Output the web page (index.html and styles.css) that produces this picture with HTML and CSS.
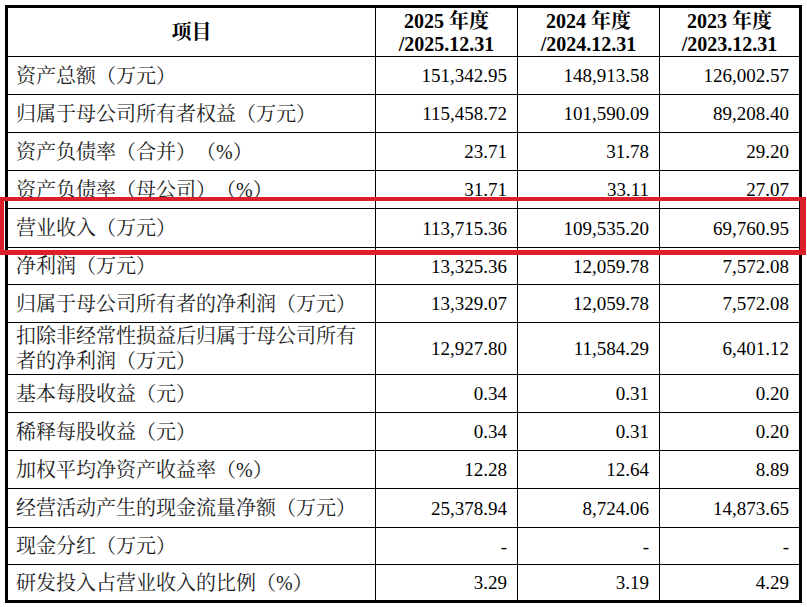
FILE: index.html
```html
<!DOCTYPE html>
<html lang="zh-CN">
<head>
<meta charset="utf-8">
<title>主要财务数据</title>
<link rel="stylesheet" href="styles.css">
</head>
<body>
<div class="page">
  <div class="sheet">
    <div class="c h">项目</div>
    <div class="c h"><span>2025 年度</span><span>/2025.12.31</span></div>
    <div class="c h"><span>2024 年度</span><span>/2024.12.31</span></div>
    <div class="c h"><span>2023 年度</span><span>/2023.12.31</span></div>

    <div class="c l">资产总额（万元）</div>
    <div class="c n">151,342.95</div><div class="c n">148,913.58</div><div class="c n">126,002.57</div>

    <div class="c l">归属于母公司所有者权益（万元）</div>
    <div class="c n">115,458.72</div><div class="c n">101,590.09</div><div class="c n">89,208.40</div>

    <div class="c l">资产负债率（合并）（%）</div>
    <div class="c n">23.71</div><div class="c n">31.78</div><div class="c n">29.20</div>

    <div class="c l">资产负债率（母公司）（%）</div>
    <div class="c n">31.71</div><div class="c n">33.11</div><div class="c n">27.07</div>

    <div class="c l">营业收入（万元）</div>
    <div class="c n">113,715.36</div><div class="c n">109,535.20</div><div class="c n">69,760.95</div>

    <div class="c l">净利润（万元）</div>
    <div class="c n">13,325.36</div><div class="c n">12,059.78</div><div class="c n">7,572.08</div>

    <div class="c l">归属于母公司所有者的净利润（万元）</div>
    <div class="c n">13,329.07</div><div class="c n">12,059.78</div><div class="c n">7,572.08</div>

    <div class="c l two">扣除非经常性损益后归属于母公司所有者的净利润（万元）</div>
    <div class="c n">12,927.80</div><div class="c n">11,584.29</div><div class="c n">6,401.12</div>

    <div class="c l">基本每股收益（元）</div>
    <div class="c n">0.34</div><div class="c n">0.31</div><div class="c n">0.20</div>

    <div class="c l">稀释每股收益（元）</div>
    <div class="c n">0.34</div><div class="c n">0.31</div><div class="c n">0.20</div>

    <div class="c l">加权平均净资产收益率（%）</div>
    <div class="c n">12.28</div><div class="c n">12.64</div><div class="c n">8.89</div>

    <div class="c l">经营活动产生的现金流量净额（万元）</div>
    <div class="c n">25,378.94</div><div class="c n">8,724.06</div><div class="c n">14,873.65</div>

    <div class="c l">现金分红（万元）</div>
    <div class="c n">-</div><div class="c n">-</div><div class="c n">-</div>

    <div class="c l">研发投入占营业收入的比例（%）</div>
    <div class="c n">3.29</div><div class="c n">3.19</div><div class="c n">4.29</div>
  </div>
  <div class="highlight"></div>
</div>
</body>
</html>
```

FILE: styles.css
```css
* { box-sizing: border-box; }

html, body {
  margin: 0;
  padding: 0;
  background: #ffffff;
}

.page {
  position: relative;
  width: 807px;
  height: 607px;
  padding: 5px 0 0 5px;
}

.sheet {
  display: grid;
  width: 797px;
  border: 3px solid #000;
  background: #000;
  gap: 1px;
  grid-template-columns: 367px 141px 141px 139px;
  grid-template-rows: 48px 37px 37px 37px 37px 38px 36px 37px 51px 37px 37px 37px 38px 36px 35px;
  font-family: "Liberation Serif", "Noto Serif CJK SC", "Noto Sans CJK SC", serif;
  color: #111;
  text-spacing-trim: space-all;
}

.c {
  background: #fff;
  display: flex;
  align-items: center;
  overflow: hidden;
}

.h {
  flex-direction: column;
  justify-content: center;
  font-weight: bold;
  font-size: 20px;
  line-height: 23px;
  padding-top: 1px;
  color: #000;
}

.l {
  padding-left: 8px;
  padding-top: 1px;
  font-size: 20px;
  line-height: 25px;
  color: #222;
}

.two {
  padding-right: 6px;
}

.n {
  justify-content: flex-end;
  padding-right: 10px;
  padding-top: 1px;
  font-size: 19px;
  color: #000;
}

.highlight {
  position: absolute;
  left: 0;
  top: 197px;
  width: 806px;
  height: 58px;
  border-style: solid;
  border-color: #dc1f2b;
  border-width: 4px 6px 5px 4px;
}
```
